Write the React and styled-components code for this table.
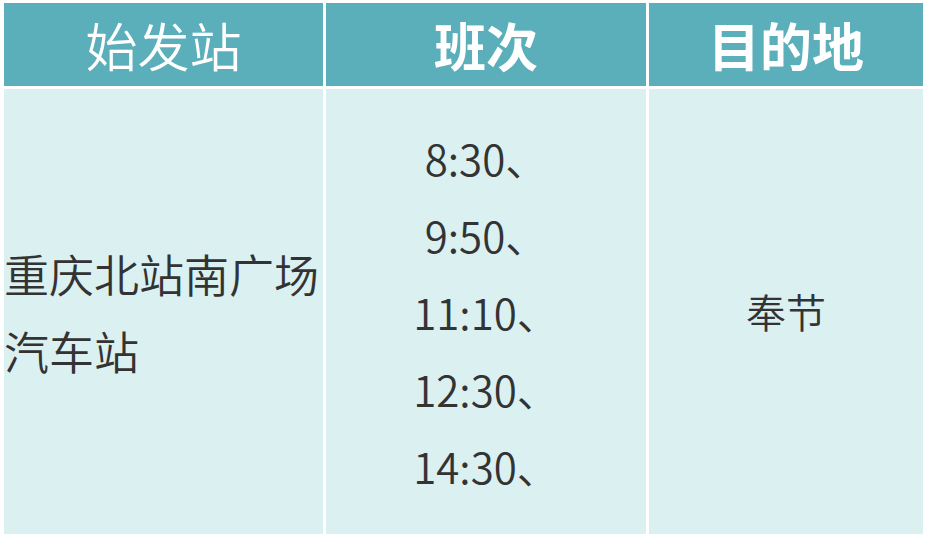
import React from 'react';
import styled, { createGlobalStyle } from 'styled-components';

const GlobalStyle = createGlobalStyle`
  html, body {
    margin: 0;
    padding: 0;
    background: #ffffff;
  }
  body {
    font-family: "Noto Sans CJK SC", "Noto Sans", sans-serif;
  }
`

const Table = styled.div`
  display: grid;
  grid-template-columns: 319px 320px 274px;
  grid-template-rows: 83px 445px;
  gap: 3px;
  padding: 3px 4px 4px 4px;
  width: 927px;
  height: 538px;
  box-sizing: border-box;
  background: #ffffff;
`

const HeadCell = styled.div`
  background: #5aafba;
  color: #ffffff;
  display: flex;
  align-items: center;
  justify-content: center;
  font-size: 52px;
  font-weight: ${p => (p.$bold ? 700 : 350)};
  line-height: 1;
  padding-top: 1px;
`

const BodyCell = styled.div`
  background: #daf0f1;
  color: #333333;
  display: flex;
  flex-direction: column;
  align-items: ${p => (p.$left ? 'flex-start' : 'center')};
  justify-content: center;
  text-align: ${p => (p.$left ? 'left' : 'center')};
  font-size: ${p => p.$size || 44}px;
  font-weight: 350;
  line-height: 77px;
`

const Line = styled.div`
  white-space: nowrap;
`

const times = ['8:30、', '9:50、', '11:10、', '12:30、', '14:30、'];

export default function App() {
  return (
    <>
      <GlobalStyle />
      <Table>
        <HeadCell>始发站</HeadCell>
        <HeadCell $bold>班次</HeadCell>
        <HeadCell $bold>目的地</HeadCell>
        <BodyCell $left $size={45}>
          <Line>重庆北站南广场</Line>
          <Line>汽车站</Line>
        </BodyCell>
        <BodyCell $size={42}>
          {times.map(t => (
            <Line key={t}>{t}</Line>
          ))}
        </BodyCell>
        <BodyCell $size={40}>
          <Line>奉节</Line>
        </BodyCell>
      </Table>
    </>
  )
}
